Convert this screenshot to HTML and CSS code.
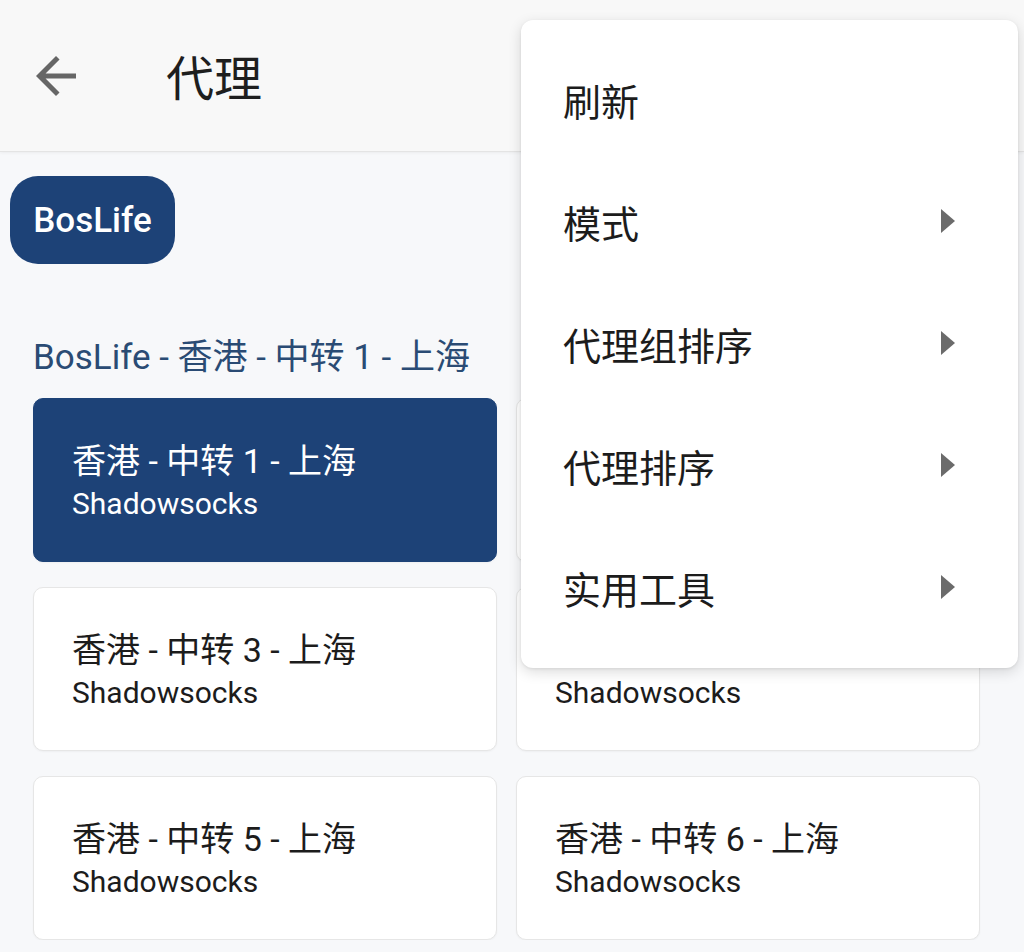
FILE: index.html
```html
<!DOCTYPE html>
<html>
<head>
    <title>代理</title>
    <link rel="stylesheet" href="styles.css">
</head>
<body>
    <header class="app-bar">
        <svg class="back-icon" viewBox="0 0 24 24"><path d="M20 11H7.83l5.59-5.59L12 4l-8 8 8 8 1.41-1.41L7.83 13H20v-2z"/></svg>
        <div class="app-title">代理</div>
    </header>

    <main class="content">
        <div class="chips">
            <span class="chip">BosLife</span>
        </div>
        <div class="group-title">BosLife - 香港 - 中转 1 - 上海</div>
        <div class="proxy-grid">
            <div class="proxy-card selected">
                <div class="proxy-name">香港 - 中转 1 - 上海</div>
                <div class="proxy-type">Shadowsocks</div>
            </div>
            <div class="proxy-card">
                <div class="proxy-name">香港 - 中转 2 - 上海</div>
                <div class="proxy-type">Shadowsocks</div>
            </div>
            <div class="proxy-card">
                <div class="proxy-name">香港 - 中转 3 - 上海</div>
                <div class="proxy-type">Shadowsocks</div>
            </div>
            <div class="proxy-card">
                <div class="proxy-name">香港 - 中转 4 - 上海</div>
                <div class="proxy-type">Shadowsocks</div>
            </div>
            <div class="proxy-card">
                <div class="proxy-name">香港 - 中转 5 - 上海</div>
                <div class="proxy-type">Shadowsocks</div>
            </div>
            <div class="proxy-card">
                <div class="proxy-name">香港 - 中转 6 - 上海</div>
                <div class="proxy-type">Shadowsocks</div>
            </div>
        </div>
    </main>

    <div class="menu">
        <div class="menu-item">刷新</div>
        <div class="menu-item">模式 <svg class="sub-arrow" viewBox="0 0 14 24"><path d="M0 0L14 12L0 24Z"/></svg></div>
        <div class="menu-item">代理组排序 <svg class="sub-arrow" viewBox="0 0 14 24"><path d="M0 0L14 12L0 24Z"/></svg></div>
        <div class="menu-item">代理排序 <svg class="sub-arrow" viewBox="0 0 14 24"><path d="M0 0L14 12L0 24Z"/></svg></div>
        <div class="menu-item">实用工具 <svg class="sub-arrow" viewBox="0 0 14 24"><path d="M0 0L14 12L0 24Z"/></svg></div>
    </div>
</body>
</html>
```

FILE: styles.css
```css
body {
    margin: 0;
    background: #f7f8fa;
    font-family: Roboto, 'Noto Sans CJK SC', sans-serif;
    color: #1c1c1c;
    overflow: hidden;
}
.app-bar {
    height: 143px;
    padding-top: 8px;
    display: flex;
    align-items: center;
    background: #f8f8f8;
    border-bottom: 1px solid #e4e4e4;
    box-shadow: 0 1px 3px rgba(0, 0, 0, 0.05);
}
.back-icon {
    width: 60px;
    height: 60px;
    margin-left: 26px;
    margin-top: -8px;
    fill: #666;
}
.app-title {
    margin-left: 80px;
    font-size: 48px;
    line-height: 60px;
    color: #1e1e1e;
}
.content {
    padding: 24px 44px 0 33px;
}
.chips {
    margin-left: -23px;
}
.chip {
    display: inline-flex;
    align-items: center;
    justify-content: center;
    width: 165px;
    height: 88px;
    border-radius: 28px;
    background: #1d4277;
    color: #fff;
    font-size: 35px;
    font-weight: 500;
}
.group-title {
    margin-top: 76px;
    font-size: 35px;
    line-height: 36px;
    color: #2a4b74;
}
.proxy-grid {
    margin-top: 22px;
    display: grid;
    grid-template-columns: 1fr 1fr;
    column-gap: 19px;
    row-gap: 25px;
}
.proxy-card {
    height: 162px;
    display: flex;
    flex-direction: column;
    justify-content: center;
    padding: 0 38px;
    background: #fff;
    border: 1px solid #e6e6e6;
    border-radius: 10px;
    box-shadow: 0 1px 2px rgba(0, 0, 0, 0.04);
}
.proxy-card.selected {
    background: #1d4277;
    border-color: #1d4277;
    color: #fff;
}
.proxy-name {
    font-size: 34px;
    line-height: 44px;
    margin-top: 2px;
}
.proxy-type {
    margin-top: 2px;
    font-size: 30px;
    line-height: 38px;
}
.menu {
    position: absolute;
    left: 521px;
    top: 20px;
    width: 497px;
    padding: 18px 0 20px;
    background: #fff;
    border-radius: 12px;
    box-shadow: 0 4px 14px rgba(0, 0, 0, 0.14), 0 1px 3px rgba(0, 0, 0, 0.08);
}
.menu-item {
    height: 122px;
    display: flex;
    align-items: center;
    justify-content: space-between;
    padding: 0 63px 0 42px;
    font-size: 38px;
    color: #1c1c1c;
}
.sub-arrow {
    width: 14px;
    height: 24px;
    fill: #6b6b6b;
}
```
